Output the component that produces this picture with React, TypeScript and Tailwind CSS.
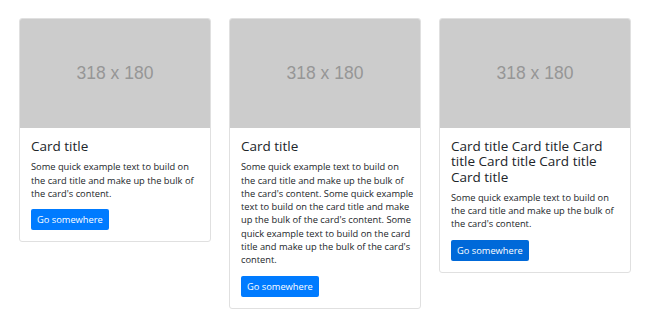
import React from 'react';

const shortText = [
  'Some quick example text to build on',
  'the card title and make up the bulk of',
  "the card's content."
];

const longText = [
  'Some quick example text to build on',
  'the card title and make up the bulk of',
  "the card's content. Some quick example",
  'text to build on the card title and make',
  "up the bulk of the card's content. Some",
  'quick example text to build on the card',
  "title and make up the bulk of the card's",
  'content.'
];

interface CardProps {
  title: string;
  lines: string[];
  buttonClass?: string;
}

function Card({ title, lines, buttonClass = 'bg-[#007bff]' }: CardProps) {
  return <div className="w-[192px] flex flex-col bg-white border border-[#e0e0e0] rounded-[3px] overflow-hidden">
      <div className="h-[109px] bg-[#cccccc] flex items-center justify-center">
        <span className="text-[17.5px] text-[#969696] font-['Liberation_Sans',Arial,sans-serif]">318 x 180</span>
      </div>
      <div className="px-[11px] pt-[11px] pb-[11px]">
        <h5 className="text-[13.5px] leading-[15.3px] text-[#212529] mb-[6px]">{title}</h5>
        <p className="text-[9.3px] leading-[13.3px] text-[#212529] mb-[5px]">
          {lines.map((line, i) => <span key={i} className="block whitespace-nowrap">{line}</span>)}
        </p>
        <button className={`${buttonClass} text-white text-[9.3px] leading-[13px] px-[6px] py-[4px] rounded-[2px]`}>
          Go somewhere
        </button>
      </div>
    </div>;
}

export default function App() {
  return <div className="bg-white min-h-[336px] px-[19px] pt-[18px] font-['Open_Sans','Noto_Sans',sans-serif]">
      <div className="flex items-start gap-[18px]">
        <Card title="Card title" lines={shortText} />
        <Card title="Card title" lines={longText} />
        <Card title="Card title Card title Card title Card title Card title Card title" lines={shortText} buttonClass="bg-[#0069d9]" />
      </div>
    </div>;
}
